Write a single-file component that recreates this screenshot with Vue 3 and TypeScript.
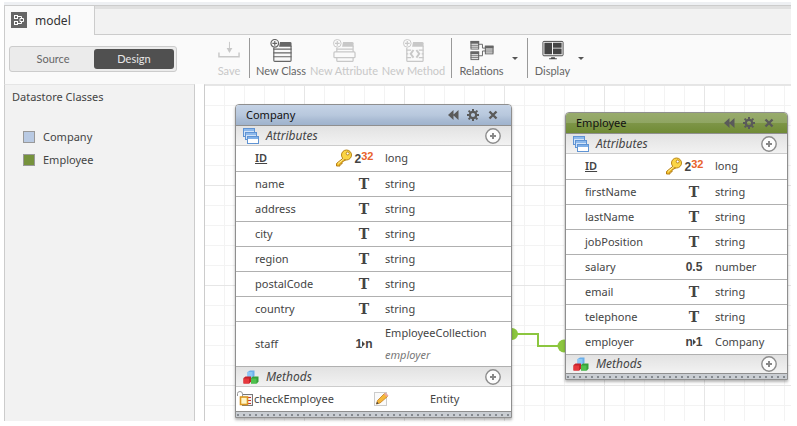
<script setup lang="ts">
import { ref } from 'vue'

type Kind = 'long' | 'string' | 'number' | 'one-many' | 'many-one'

interface Attribute {
  name: string
  kind: Kind
  type: string
  key?: boolean
  path?: string
}

interface Method {
  name: string
  scope: string
}

interface DataClass {
  name: string
  tone: string
  attributes: Attribute[]
  methods: Method[]
}

const mode = ref<'Source' | 'Design'>('Design')

const text = (name: string): Attribute => ({ name, kind: 'string', type: 'string' })

const classes: DataClass[] = [
  {
    name: 'Company',
    tone: 'blue',
    attributes: [
      { name: 'ID', kind: 'long', type: 'long', key: true },
      ...['name', 'address', 'city', 'region', 'postalCode', 'country'].map(text),
      { name: 'staff', kind: 'one-many', type: 'EmployeeCollection', path: 'employer' },
    ],
    methods: [{ name: 'checkEmployee', scope: 'Entity' }],
  },
  {
    name: 'Employee',
    tone: 'green',
    attributes: [
      { name: 'ID', kind: 'long', type: 'long', key: true },
      ...['firstName', 'lastName', 'jobPosition'].map(text),
      { name: 'salary', kind: 'number', type: 'number' },
      ...['email', 'telephone'].map(text),
      { name: 'employer', kind: 'many-one', type: 'Company' },
    ],
    methods: [],
  },
]
</script>

<template>
  <div class="app">
    <nav class="tabs">
      <button class="tab" type="button">
        <svg width="16" height="16" viewBox="0 0 16 16" aria-hidden="true">
          <rect width="16" height="16" fill="#666" />
          <g fill="none" stroke="#fff">
            <rect x="3.5" y="3.5" width="3" height="3" />
            <rect x="3.5" y="9.5" width="3" height="3" />
            <path d="M7 4.5H10.5V6M7 11.5H10.5V10M9 6.5H12.5V9.5H9Z" />
          </g>
        </svg>
        <span>model</span>
      </button>
      <div class="tab-rest"></div>
    </nav>

    <header class="toolbar">
      <div class="switch">
        <button type="button" :class="{ on: mode === 'Source' }" @click="mode = 'Source'">Source</button>
        <button type="button" :class="{ on: mode === 'Design' }" @click="mode = 'Design'">Design</button>
      </div>

      <div class="tools">
        <button class="tool save" type="button" disabled>
          <svg width="24" height="24" viewBox="0 0 24 24" aria-hidden="true">
            <path d="M1.5 14V18.5H22.5V14" fill="none" stroke="currentColor" stroke-width="1.5" />
            <path d="M12.5 3V13" stroke="currentColor" />
            <path d="M9.5 9.5H15.5L12.5 14.5Z" fill="currentColor" />
          </svg>
          <span>Save</span>
        </button>
        <i class="rule"></i>
        <button class="tool class" type="button">
          <svg width="24" height="24" viewBox="0 0 24 24" aria-hidden="true">
            <path d="M11 3H21.5Q23 3 23 4.5V8H4V7.500L10 8Z" fill="currentColor" />
            <g fill="none" stroke="currentColor" stroke-width="1.2">
              <path d="M4.5 9V22.5Q4.5 23.4 5.5 23.4H21.5Q22.500 23.4 22.5 22.5V7" />
              <path d="M4 10.5H23M4 14.5H23M4 18.5H23" />
            </g>
            <circle cx="5.5" cy="4.5" r="4" fill="#fafafa" stroke="currentColor" stroke-width="1.2" />
            <path d="M3 4.5H8M5.5 2V7" stroke="currentColor" stroke-width="1.2" />
          </svg>
          <span>New Class</span>
        </button>
        <button class="tool attribute" type="button" disabled>
          <svg width="24" height="24" viewBox="0 0 24 24" aria-hidden="true">
            <path d="M11 3H20.5Q22 3 22 4.5V8H10Z" fill="currentColor" />
            <g fill="none" stroke="currentColor" stroke-width="1.3">
              <path d="M4.5 9V22.5Q4.500 23.4 5.5 23.4H20.5Q21.5 23.4 21.5 22.5V7M4 10.500H22" />
              <rect x="1.5" y="13.5" width="22" height="6" rx="1" fill="#fafafa" />
            </g>
            <circle cx="5" cy="4.5" r="4" fill="#fafafa" stroke="currentColor" />
            <path d="M2.5 4.5H7.5M5 2V7" stroke="currentColor" stroke-width="1.2" />
          </svg>
          <span>New Attribute</span>
        </button>
        <button class="tool method" type="button" disabled>
          <svg width="24" height="24" viewBox="0 0 24 24" aria-hidden="true">
            <path d="M11 3H20.5Q22 3 22 4.5V8H10Z" fill="currentColor" />
            <g fill="none" stroke="currentColor" stroke-width="1.3">
              <path d="M4.5 9V22.5Q4.5 23.4 5.5 23.4H20.5Q21.5 23.4 21.5 22.5V7" />
              <path d="M4 11.5H9M17 11.5H22M4 15.5H6M20 15.5H22M4 19.5H9M17 19.5H22" />
              <path d="M11.5 11.5L8.5 15.5L11.5 19.5M14.5 11.5L17.5 15.5L14.5 19.5" stroke-width="2" />
            </g>
            <circle cx="5" cy="4.5" r="4" fill="#fafafa" stroke="currentColor" />
            <path d="M2.5 4.5H7.5M5 2V7" stroke="currentColor" stroke-width="1.2" />
          </svg>
          <span>New Method</span>
        </button>
        <i class="rule"></i>
        <button class="tool relations" type="button">
          <svg width="26" height="24" viewBox="0 0 26 24" aria-hidden="true">
            <g fill="none" stroke="currentColor">
              <path d="M9 5.5H13.5V9.5H17M9 17.5H13.5V12.500H17" />
              <rect x="1.5" y="2.5" width="8" height="8" />
              <rect x="1.5" y="13.5" width="8" height="8" />
              <rect x="16.5" y="7.5" width="8" height="8" />
              <path d="M1 6.5H10M1 8.5H10M1 17.5H10M1 19.5H10M16 11.5H25M16 13.5H25" />
            </g>
            <path d="M1 2H10V5H1ZM1 13H10V16H1ZM16 7H25V10H16Z" fill="currentColor" />
          </svg>
          <span>Relations</span>
          <i class="caret"></i>
        </button>
        <i class="rule"></i>
        <button class="tool display" type="button">
          <svg width="24" height="24" viewBox="0 0 24 24" aria-hidden="true">
            <rect x="1.5" y="2.5" width="21" height="15" rx="1" fill="#fafafa" stroke="#444" />
            <path d="M3 4H11V16H3ZM12 4H21V9H12ZM12 10H21V16H12Z" fill="#444" />
            <path d="M10 19H14V20H16V21H8V20H10Z" fill="#444" />
          </svg>
          <span>Display</span>
          <i class="caret"></i>
        </button>
      </div>
    </header>

    <main class="work">
      <aside class="side">
        <h2>Datastore Classes</h2>
        <ul>
          <li v-for="c in classes" :key="c.name"><i :class="['swatch', c.tone]"></i>{{ c.name }}</li>
        </ul>
      </aside>

      <section class="canvas">
        <svg class="link" width="54" height="26" viewBox="0 0 54 26" aria-hidden="true">
          <circle cx="1" cy="7" r="6" fill="#8cc63f" />
          <circle cx="53" cy="19" r="6.5" fill="#8cc63f" />
          <path d="M1 7H27V19H53" fill="none" stroke="#8cc63f" stroke-width="2" />
        </svg>

        <article v-for="c in classes" :key="c.name" :class="['node', c.tone]">
          <header class="title">
            <h3>{{ c.name }}</h3>
            <button type="button" aria-label="Collapse">
              <svg width="12" height="12" viewBox="0 0 12 12"><path d="M5.500 1V11L0 6ZM10.5 1V11L5 6Z" fill="#5a5a5a" /></svg>
            </button>
            <button type="button" aria-label="Settings">
              <svg width="12" height="12" viewBox="0 0 12 12">
                <circle cx="6" cy="6" r="3.200" fill="none" stroke="#5a5a5a" stroke-width="2.2" />
                <path d="M6 0V2M6 10V12M0 6H2M10 6H12M1.6 1.6L3.2 3.2M8.8 8.8L10.4 10.4M10.4 1.6L8.8 3.2M3.2 8.8L1.6 10.4" stroke="#5a5a5a" stroke-width="2" />
              </svg>
            </button>
            <button type="button" aria-label="Close">
              <svg width="12" height="12" viewBox="0 0 12 12"><path d="M2.5 2.5L9.5 9.5M9.5 2.5L2.5 9.5" stroke="#5a5a5a" stroke-width="2.4" /></svg>
            </button>
          </header>

          <div class="section">
            <svg width="16" height="16" viewBox="0 0 16 16" aria-hidden="true">
              <g stroke="#5f93d3">
                <rect x="0.5" y="0.5" width="11" height="8" fill="#d3e4f8" />
                <path d="M1 1H11V3H1Z" fill="#8db9ec" stroke="none" />
                <rect x="2.5" y="4.5" width="11" height="7" fill="#d3e4f8" />
                <path d="M3 5H13V7H3Z" fill="#8db9ec" stroke="none" />
                <rect x="4.5" y="8.5" width="11" height="7" fill="#fff" />
                <path d="M5 9H15V11H5Z" fill="#7fb0e8" stroke="none" />
              </g>
            </svg>
            <h4>Attributes</h4>
            <button type="button" aria-label="Add attribute">
              <svg width="16" height="16" viewBox="0 0 16 16"><circle cx="8" cy="8" r="7.2" fill="#fdfdfd" stroke="#8c8c8c" stroke-width="1.4" /><path d="M5 8H11M8 5V11" stroke="#888" stroke-width="2" /></svg>
            </button>
          </div>

          <table class="attributes">
            <tbody>
              <tr v-for="a in c.attributes" :key="a.name" :class="{ primary: a.key, related: a.path }">
                <th scope="row">{{ a.name }}</th>
                <td class="kind">
                  <div>
                    <svg v-if="a.key" width="18" height="18" viewBox="0 0 18 18" aria-hidden="true">
                      <path d="M9.5 8L1.5 14.5V17H5V15H7V13L11.5 10.5Z" fill="#f6c52e" stroke="#b57d14" />
                      <circle cx="11.5" cy="6" r="5" fill="#fbd544" stroke="#b98618" />
                      <circle cx="12.7" cy="4.5" r="1.5" fill="#fff" stroke="#b98618" />
                      <path d="M3 14.5L9 9.5" stroke="#fff0a0" />
                    </svg>
                    <span v-if="a.kind === 'long'" class="glyph power">2<sup>32</sup></span>
                    <span v-else-if="a.kind === 'string'" class="glyph letter">T</span>
                    <span v-else-if="a.kind === 'number'" class="glyph">0.5</span>
                    <span v-else class="glyph">{{ a.kind === 'one-many' ? '1' : 'n' }}<i></i>{{ a.kind === 'one-many' ? 'n' : '1' }}</span>
                  </div>
                </td>
                <td>{{ a.type }}<em v-if="a.path">{{ a.path }}</em></td>
              </tr>
            </tbody>
          </table>

          <div class="section">
            <svg width="16" height="16" viewBox="0 0 16 16" aria-hidden="true">
              <path d="M4.5 3L7 1.5H11.5V7L10 8.5H4.5Z" fill="#6aaeea" />
              <path d="M4.5 3H9.5V8H4.5Z" fill="#8cc8f6" />
              <path d="M0.5 9L2.5 7.5H8V12.5L6.5 14.5H0.5Z" fill="#c4232a" />
              <path d="M0.5 9.5H6V14.5H0.5Z" fill="#e6383d" />
              <path d="M8 9L10 7.5H15.5V12.5L14 14.5H8Z" fill="#35a03a" />
              <path d="M8 9.5H13.5V14.5H8Z" fill="#4fc14e" />
            </svg>
            <h4>Methods</h4>
            <button type="button" aria-label="Add method">
              <svg width="16" height="16" viewBox="0 0 16 16"><circle cx="8" cy="8" r="7.2" fill="#fdfdfd" stroke="#8c8c8c" stroke-width="1.4" /><path d="M5 8H11M8 5V11" stroke="#888" stroke-width="2" /></svg>
            </button>
          </div>

          <table v-if="c.methods.length" class="methods">
            <tbody>
              <tr v-for="m in c.methods" :key="m.name">
                <td class="lock">
                  <svg width="16" height="16" viewBox="0 0 16 16" aria-hidden="true">
                    <rect x="5.5" y="3.5" width="10" height="11" fill="#f3f3f3" stroke="#777" />
                    <path d="M11 6.5H14M11 9.5H14M11 12.5H14" stroke="#c33" />
                    <path d="M0.5 5V2.5Q0.5 0.5 3 0.5Q5.5 0.5 5.5 3V6" fill="none" stroke="#999" />
                    <rect x="3.5" y="6" width="7" height="7.5" fill="#fff6c8" stroke="#d9961f" stroke-width="1.6" />
                  </svg>
                </td>
                <th scope="row">{{ m.name }}</th>
                <td class="edit">
                  <button type="button" aria-label="Edit method">
                    <svg width="16" height="16" viewBox="0 0 16 16">
                      <rect x="1.5" y="1.5" width="12" height="13" fill="#fafafa" stroke="#ccc" />
                      <path d="M3.5 13L4.5 9.5L11.5 2.5L14.5 5.5L7 12Z" fill="#f5b83a" stroke="#c47d1c" stroke-width="0.8" />
                      <path d="M11 3L12.5 1.5L15.5 4.5L14 6Z" fill="#e9a8a0" />
                      <path d="M3.2 13.3L4 10.8L5.7 12.5Z" fill="#444" />
                    </svg>
                  </button>
                </td>
                <td>{{ m.scope }}</td>
              </tr>
            </tbody>
          </table>
          <footer class="grip"></footer>
        </article>
      </section>
    </main>
  </div>
</template>

<style>
body {
  background: #fff;
}
</style>

<style scoped>
.app {
  box-sizing: border-box;
  min-height: 100vh;
  padding: 0 6px 5px 4px;
  display: flex;
  flex-direction: column;
  font: 11px/16px "Noto Sans", "Open Sans", sans-serif;
  color: #444;
}
h2, h3, h4, ul {
  margin: 0;
  padding: 0;
  font-weight: 400;
  font-size: 11px;
}
button {
  margin: 0;
  padding: 0;
  border: 0;
  background: none;
  font: inherit;
  color: inherit;
}
svg {
  display: block;
}

.tabs {
  display: flex;
  height: 35px;
  box-sizing: border-box;
  border-top: 2px solid #fff;
  box-shadow: inset 0 3px #eef0f3;
  padding-top: 3px;
}
.tab {
  display: flex;
  gap: 8px;
  width: 91px;
  box-sizing: border-box;
  padding: 6px 0 0 6px;
  border: 1px solid #ccc;
  border-bottom: 0;
  background: #fafafa;
  font-size: 12px;
  line-height: 18px;
  color: #333;
}
.tab-rest {
  flex: 1;
  border-top: 1px solid #ccc;
  border-bottom: 1px solid #ccc;
  background: linear-gradient(#e0e0e0 3px, #f2f2f2 3px);
}

.toolbar {
  display: flex;
  height: 49px;
  border-left: 1px solid #ccc;
  background: #fafafa;
  font: 11px/14px Lato, sans-serif;
  color: #666;
}
.switch {
  display: grid;
  grid-template-columns: 1fr 80px;
  width: 168px;
  height: 26px;
  box-sizing: border-box;
  margin: 11px 0 0 4px;
  padding: 2px;
  border: 1px solid #ccc;
  border-radius: 3px;
  background: #ebebeb;
}
.switch button {
  border-radius: 3px;
}
.switch .on {
  background: #505050;
  color: #e8e8e8;
}
.tools {
  display: flex;
  gap: 8px;
  padding: 3px 0 6px 40px;
}
.tool {
  position: relative;
  display: flex;
  flex-direction: column;
  align-items: center;
  justify-content: flex-start;
  gap: 2px;
  padding-top: 1px;
  white-space: nowrap;
}
.tool:disabled {
  color: #c8c8c8;
}
.save { width: 24px; }
.class { width: 46px; }
.attribute { width: 64px; }
.method { width: 59px; }
.relations { width: 43px; margin-right: 16px; }
.display { width: 33px; }
.rule {
  width: 1px;
  background: #999;
}
.caret {
  position: absolute;
  top: 19px;
  right: -15px;
  border: 3px solid transparent;
  border-top-color: #555;
  border-bottom: 0;
}

.work {
  flex: 1;
  display: flex;
  gap: 9px;
}
.side {
  width: 191px;
  box-sizing: border-box;
  padding: 4px 7px;
  border: 1px solid #ccc;
  border-top-color: #e5e5e5;
  border-bottom: 0;
  background: #f2f2f2;
}
.side ul {
  display: grid;
  gap: 7px;
  padding: 24px 0 0 11px;
}
.side li {
  display: flex;
  align-items: center;
  gap: 8px;
}
.swatch {
  width: 10px;
  height: 10px;
  border: 1px solid #999;
}
.swatch.blue { background: #b9cae3; }
.swatch.green { background: #76923c; }

.canvas {
  position: relative;
  flex: 1;
  border-left: 1px solid #ccc;
  border-top: 1px solid #e5e5e5;
  background-color: #fff;
  background-image:
    linear-gradient(90deg, #e6e6e6 1px, transparent 1px),
    linear-gradient(#e6e6e6 1px, transparent 1px),
    linear-gradient(90deg, #f3f3f3 1px, transparent 1px),
    linear-gradient(#f3f3f3 1px, transparent 1px);
  background-size: 100px 100px, 100px 100px, 20px 20px, 20px 20px;
  background-position: 99px 0, 0 100px, 19px 0, 0 20px;
}
.link {
  position: absolute;
  left: 306px;
  top: 242px;
  overflow: visible;
}
.node {
  position: absolute;
  box-sizing: border-box;
  border: 1px solid #8f8f8f;
  border-radius: 4px 4px 0 0;
  background: #fff;
  box-shadow: 0 2px 3px rgba(0, 0, 0, 0.3);
}
.node.blue {
  left: 30px;
  top: 19px;
  width: 277px;
}
.node.green {
  left: 360px;
  top: 27px;
  width: 223px;
}
.title {
  display: flex;
  align-items: center;
  gap: 8px;
  height: 20px;
  padding: 0 12px 0 10px;
  border-bottom: 1px solid #8f8f8f;
  border-radius: 3px 3px 0 0;
}
.title button:first-of-type {
  margin-right: -1px;
}
.blue .title { background: linear-gradient(#c5d3e6, #b8c8dd 50%, #a9bbd3 75%, #9fb3cd); }
.green .title { background: linear-gradient(#98ab6c, #8fa563 50%, #7d9547 51%, #708b35); }
.title h3 {
  flex: 1;
  color: #111;
}
.section {
  display: flex;
  align-items: center;
  gap: 7px;
  height: 19px;
  padding: 0 10px 0 7px;
  border-bottom: 1px solid #ccc;
  background: linear-gradient(#e2e2e2, #f2f2f2);
}
.section:has(+ .grip) {
  height: 18px;
  border-bottom: 0;
}
.section h4 {
  flex: 1;
  font-size: 12px;
  font-style: italic;
}
table {
  width: 100%;
  table-layout: fixed;
  border-collapse: separate;
  border-spacing: 0;
}
th, td {
  padding: 0;
  text-align: left;
  font-weight: 400;
}
.attributes th, .attributes td {
  height: 24px;
  border-bottom: 1px solid #b0b0b0;
}
.attributes th {
  width: 76px;
  padding-left: 19px;
}
.attributes .kind {
  width: 54px;
}
.kind div {
  display: flex;
  align-items: center;
  justify-content: flex-end;
  gap: 2px;
  padding-right: 12px;
}
.attributes .primary > * {
  height: 23px;
  padding-bottom: 2px;
}
.attributes .related > * {
  height: 44px;
}
.primary th {
  font-weight: 600;
  text-decoration: underline;
}
.glyph {
  display: flex;
  align-items: center;
  justify-content: center;
  width: 18px;
  font: bold 12px/16px "Liberation Sans", sans-serif;
}
.glyph i {
  border: 3px solid transparent;
  border-left-color: #444;
  border-right: 0;
}
.letter {
  font: bold 14px/16px "DejaVu Serif", serif;
}
.power {
  padding-top: 2px;
}
.power sup {
  margin-bottom: 6px;
  font-size: 11px;
  line-height: 10px;
  color: #e8622c;
}
em {
  display: block;
  margin-top: 6px;
  color: #777;
}
.methods td, .methods th {
  height: 24px;
}
.methods .lock {
  width: 17px;
  padding-left: 1px;
}
.methods th {
  width: 119px;
}
.methods .edit {
  width: 57px;
}
.edit button {
  display: block;
}
.grip {
  height: 5px;
  border-top: 1px solid #8f8f8f;
  background:
    repeating-linear-gradient(90deg, #858a90 0 2px, transparent 2px 6px) 1px 2px / 100% 2px no-repeat,
    #c9cdd2;
}
</style>
